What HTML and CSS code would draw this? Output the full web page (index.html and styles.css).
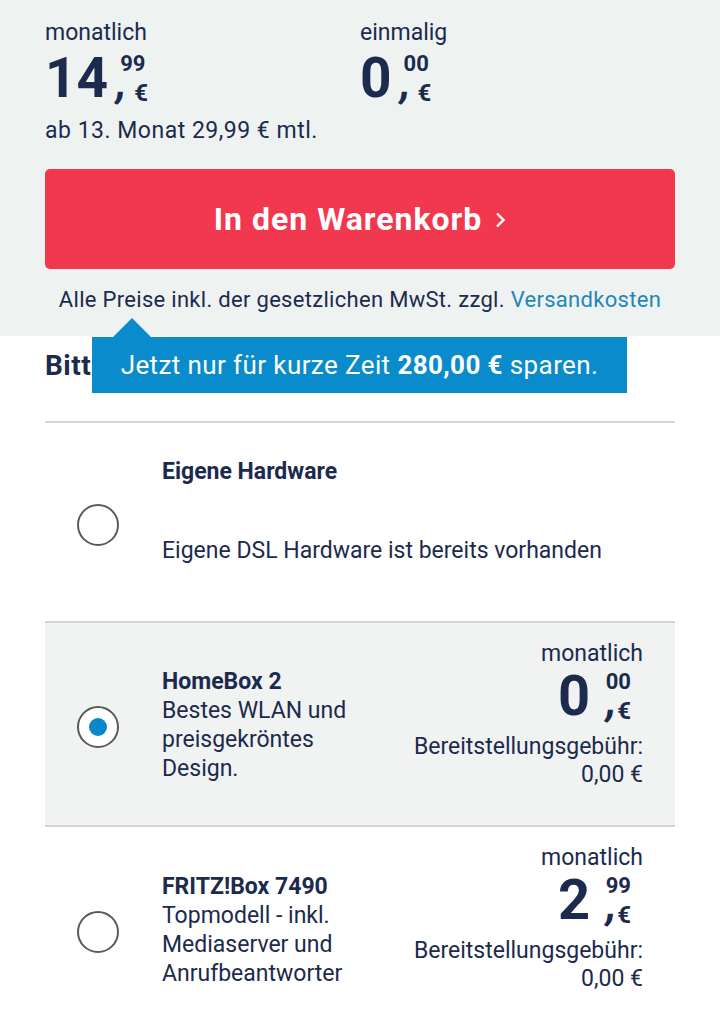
FILE: index.html
```html
<!DOCTYPE html>
<html lang="de">
<head>
  <meta charset="UTF-8">
  <meta name="viewport" content="width=device-width, initial-scale=1.0">
  <title>Hardware wählen</title>
  <link rel="stylesheet" href="styles.css">
</head>
<body>
  <section class="summary">
    <div class="totals">
      <div class="total">
        <div class="label">monatlich</div>
        <div class="price">
          <span class="int">14</span>
          <span class="dec"><span class="cents">99</span><span class="cur"><span class="comma">,</span>€</span></span>
        </div>
      </div>
      <div class="total">
        <div class="label">einmalig</div>
        <div class="price">
          <span class="int">0</span>
          <span class="dec"><span class="cents">00</span><span class="cur"><span class="comma">,</span>€</span></span>
        </div>
      </div>
    </div>
    <p class="later">ab 13. Monat 29,99 € mtl.</p>
    <button class="cart">In den Warenkorb
      <svg class="chev" width="12" height="16" viewBox="0 0 12 16"><polyline points="3,1.5 9.5,8 3,14.5" fill="none" stroke="#fff" stroke-width="2.4"/></svg>
    </button>
    <p class="vat">Alle Preise inkl. der gesetzlichen MwSt. zzgl. <a href="#">Versandkosten</a></p>
  </section>

  <section class="hardware">
    <div class="heading-wrap">
      <h2>Bitte wählen Sie Ihre Hardware</h2>
      <div class="promo">Jetzt nur für kurze Zeit <b>280,00 €</b> sparen.</div>
    </div>

    <ul class="options">
      <li class="option">
        <span class="radio"></span>
        <div class="info info-own">
          <div class="name">Eigene Hardware</div>
          <div class="desc">Eigene DSL Hardware ist bereits vorhanden</div>
        </div>
      </li>
      <li class="option selected">
        <span class="radio"></span>
        <div class="info">
          <div class="name">HomeBox 2</div>
          <div class="desc">Bestes WLAN und preisgekröntes Design.</div>
        </div>
        <div class="cost">
          <div>monatlich</div>
          <div class="price">
            <span class="int">0</span>
            <span class="dec"><span class="cents">00</span><span class="cur"><span class="comma">,</span>€</span></span>
          </div>
          <div>Bereitstellungsgebühr:</div>
          <div>0,00 €</div>
        </div>
      </li>
      <li class="option">
        <span class="radio"></span>
        <div class="info">
          <div class="name">FRITZ!Box 7490</div>
          <div class="desc">Topmodell - inkl. Mediaserver und Anrufbeantworter</div>
        </div>
        <div class="cost">
          <div>monatlich</div>
          <div class="price">
            <span class="int">2</span>
            <span class="dec"><span class="cents">99</span><span class="cur"><span class="comma">,</span>€</span></span>
          </div>
          <div>Bereitstellungsgebühr:</div>
          <div>0,00 €</div>
        </div>
      </li>
    </ul>
  </section>
</body>
</html>
```

FILE: styles.css
```css
body {
  margin: 0;
  font-family: Roboto, 'Noto Sans', sans-serif;
  color: #1c2a4d;
  background: #fff;
}

.summary {
  background: #eef2f1;
  padding: 19px 45px 22px;
}
.totals { display: flex; }
.total { width: 315px; }
.label { font-size: 23px; line-height: 28px; }

.price { display: flex; align-items: flex-start; font-weight: 700; }
.price .int { font-size: 55px; line-height: 62px; }
.price .dec { display: flex; flex-direction: column; margin-left: 12px; padding-top: 5px; }
.price .cents { font-size: 22px; line-height: 24px; }
.price .cur { display: block; height: 34px; font-size: 24px; line-height: 34px; margin-left: -4px; white-space: nowrap; }
.price .comma {
  display: inline-block;
  vertical-align: top;
  font-size: 44px;
  line-height: 34px;
  width: 18px;
  transform: translateY(-11px) skewX(-8deg);
}

.later { margin: 7px 0 24px; font-size: 23px; line-height: 28px; letter-spacing: 0.5px; }

.cart {
  display: flex;
  align-items: center;
  justify-content: center;
  width: 100%;
  height: 100px;
  border: none;
  border-radius: 5px;
  background: #f2384e;
  color: #fff;
  font-family: inherit;
  font-size: 32px;
  font-weight: 700;
  letter-spacing: 1px;
  cursor: pointer;
}
.cart .chev { margin-left: 12px; margin-top: 1px; }

.vat { margin: 17px 0 0; text-align: center; font-size: 22px; line-height: 28px; letter-spacing: 0.3px; }
.vat a { color: #1e88b8; text-decoration: none; }

.hardware { padding: 0 45px; }
.heading-wrap { position: relative; height: 85px; }
.heading-wrap h2 { margin: 0; padding-top: 13px; font-size: 28px; line-height: 34px; letter-spacing: 0.5px; }
.promo {
  position: absolute;
  left: 47px;
  top: 1px;
  width: 535px;
  height: 56px;
  background: #0a8bcb;
  color: #fff;
  font-size: 26px;
  line-height: 56px;
  letter-spacing: 0.4px;
  text-align: center;
}
.promo::before {
  content: '';
  position: absolute;
  left: 20px;
  top: -19px;
  border-left: 20px solid transparent;
  border-right: 20px solid transparent;
  border-bottom: 20px solid #0a8bcb;
}

.options { list-style: none; margin: 0; padding: 0; border-top: 2px solid #d3d6d6; }
.option {
  display: flex;
  align-items: center;
  height: 200px;
  box-sizing: border-box;
  border-bottom: 2px solid #d3d6d6;
  padding: 0 32px;
}
.option + .option { height: 204px; }
.option:last-child { border-bottom: none; }
.option.selected { background: #f0f3f2; }

.radio {
  flex: none;
  position: relative;
  width: 38px;
  height: 38px;
  border: 2px solid #5a5a5a;
  border-radius: 50%;
  background: #fff;
  margin: 5px 43px 0 0;
}
.selected .radio::after {
  content: '';
  position: absolute;
  left: 10px;
  top: 10px;
  width: 18px;
  height: 18px;
  border-radius: 50%;
  background: #0a87c8;
}

.info { font-size: 23px; line-height: 29px; }
.info .name { font-weight: 700; }
.info-own { margin-bottom: 23px; }
.info-own .name { margin-bottom: 50px; }
.option + .option .info { max-width: 215px; margin-top: 2px; }

.cost {
  align-self: flex-start;
  margin-left: auto;
  padding-top: 17px;
  text-align: right;
  font-size: 23px;
  line-height: 28px;
}
.cost .price { justify-content: flex-end; margin: 0 12px 5px 0; }
.cost .price .int { font-size: 56px; line-height: 56px; }
.cost .price .dec { padding-top: 2px; margin-left: 9px; }
.cost .price .cur { margin-left: 0; }
```
